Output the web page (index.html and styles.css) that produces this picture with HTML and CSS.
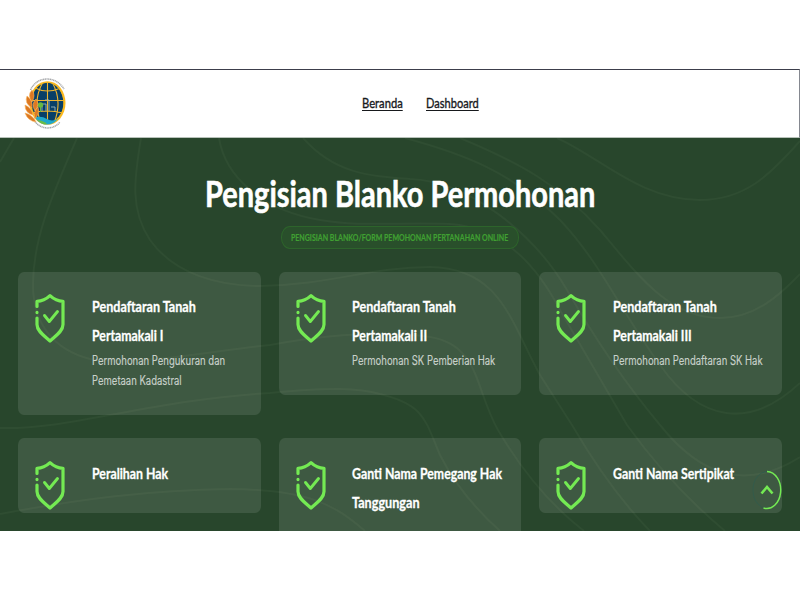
FILE: index.html
```html
<!DOCTYPE html>
<html lang="id">
<head>
<meta charset="utf-8">
<title>Pengisian Blanko Permohonan</title>
<link rel="stylesheet" href="styles.css">
</head>
<body>
<svg class="defs" width="0" height="0" aria-hidden="true">
  <symbol id="shield" viewBox="0 0 30 50">
    <g fill="none" stroke="#74ea53" stroke-width="3.2" stroke-linecap="round" stroke-linejoin="round">
      <path d="M2 13.500V8.300C7 8.300 11.500 6 15 2.700C18.500 6 23 8.300 28 8.300V31.500C28 38 21 42.500 15 48C9 42.500 2 38 2 31.500V25M2 19.400V19.600"/>
      <path d="M9.500 22.500L14.300 28.500L22.500 18.500" stroke-width="2.900"/>
    </g>
  </symbol>
</svg>
<div class="screen">
  <header class="header">
    <svg class="logo" viewBox="0 0 44 54">
      <defs><clipPath id="globe"><ellipse cx="24" cy="26.500" rx="16.500" ry="21"/></clipPath></defs>
      <path d="M7.500 13C14 -1.500 33 -1.500 41 12" fill="none" stroke="#a5a7aa" stroke-width="1.500" stroke-dasharray="1.200 .5"/>
      <path d="M12 44.500C18 53 31 53 37 45" fill="none" stroke="#a5a7aa" stroke-width="1.500" stroke-dasharray="1.200 .5"/>
      <ellipse cx="24.500" cy="26" rx="18" ry="21.800" fill="#fab91f"/>
      <g clip-path="url(#globe)">
        <ellipse cx="24.500" cy="25.500" rx="16" ry="19.800" fill="#083f67"/>
        <path d="M24.500 4V46M12 11Q24 17 38 11M8 23.500H41M9 36Q24 32 40 36M20 5Q9 24 18 46M29 5Q40 24 31 46" fill="none" stroke="#f0b52d" stroke-width="1.100"/>
        <path d="M9 41Q18 38 24 42T40 39V50H9Z" fill="#20a8ca"/>
        <path d="M12 43Q20 43 24 47L18 50Z" fill="#6abd45"/>
        <path d="M19 34V27H23V34M22 23H26V34M28 30H32V34" fill="none" stroke="#9db9bd" stroke-width=".9"/>
        <circle cx="17.500" cy="28" r="2.700" fill="#66b843"/><path d="M17.500 29V35" stroke="#66b843"/>
      </g>
      <g fill="#dd7822" stroke="#f6b35b" stroke-width=".6">
        <path d="M9 13Q4 18 9 25Q13 18 9 13ZM4 19Q1 26 9 31Q10 23 4 19ZM13 22Q8 27 12 34Q17 27 13 22ZM2 28Q2 36 10 38Q9 31 2 28ZM15 30Q10 34 12 42Q17 36 15 30ZM2 36Q5 44 13 45Q10 38 2 36Z"/>
      </g>
    </svg>
    <nav class="nav">
      <a class="nav-home" href="#"><span class="fit">Beranda</span></a>
      <a class="nav-dash" href="#"><span class="fit">Dashboard</span></a>
    </nav>
  </header>
  <main class="hero">
    <svg class="contours" viewBox="0 138 800 393">
      <path d="M14 138L0 162"/>
      <path d="M77 138C50 200 33 240 33 285C33 325 55 350 90 359C145 366 215 350 270 345C320 336 380 330 430 337C480 345 475 390 498 430Q535 493 584 531"/>
      <path d="M141 138C134 180 130 210 150 240C175 275 220 286 260 286C330 285 370 267 430 267C500 268 510 320 540 375L572 425Q610 490 650 531"/>
      <path d="M219 138C225 175 260 210 320 220C360 227 400 222 450 224C500 227 535 262 560 310L627 425Q670 485 725 531"/>
      <path d="M303 138C335 174 370 176 410 179C470 181 535 235 567 290Q610 365 660 425C700 475 745 492 800 457"/>
      <path d="M405 138C460 153 510 170 560 220C600 262 620 310 660 365C700 422 750 430 800 383"/>
      <path d="M460 138C520 163 560 185 600 230C640 278 670 318 720 318C755 318 780 295 800 274"/>
      <path d="M557 138C600 157 640 200 700 200C745 200 770 175 800 141"/>
      <path d="M0 428C70 430 150 400 270 393C330 387 360 388 380 394C425 405 425 420 440 455Q460 495 500 531"/>
      <path d="M0 514C80 499 150 490 230 489C310 490 335 505 365 531"/>
    </svg>
    <h1 class="title"><span class="fit">Pengisian Blanko Permohonan</span></h1>
    <p class="badge"><span class="fit">PENGISIAN BLANKO/FORM PEMOHONAN PERTANAHAN ONLINE</span></p>
    <section class="cards">
      <article class="card">
        <svg class="icon"><use href="#shield"/></svg>
        <div class="text"><h2><span class="fit t-pt">Pendaftaran Tanah</span><span class="fit">Pertamakali I</span></h2>
        <p><span class="fit">Permohonan Pengukuran dan</span><span class="fit">Pemetaan Kadastral</span></p></div>
      </article>
      <article class="card">
        <svg class="icon"><use href="#shield"/></svg>
        <div class="text"><h2><span class="fit t-pt">Pendaftaran Tanah</span><span class="fit">Pertamakali II</span></h2>
        <p><span class="fit">Permohonan SK Pemberian Hak</span></p></div>
      </article>
      <article class="card">
        <svg class="icon"><use href="#shield"/></svg>
        <div class="text"><h2><span class="fit t-pt">Pendaftaran Tanah</span><span class="fit">Pertamakali III</span></h2>
        <p><span class="fit">Permohonan Pendaftaran SK Hak</span></p></div>
      </article>
      <article class="card">
        <svg class="icon"><use href="#shield"/></svg>
        <div class="text"><h2><span class="fit">Peralihan Hak</span></h2></div>
      </article>
      <article class="card">
        <svg class="icon"><use href="#shield"/></svg>
        <div class="text"><h2><span class="fit">Ganti Nama Pemegang Hak</span><span class="fit t-tg">Tanggungan</span></h2></div>
      </article>
      <article class="card">
        <svg class="icon"><use href="#shield"/></svg>
        <div class="text"><h2><span class="fit">Ganti Nama Sertipikat</span></h2></div>
      </article>
    </section>
    <a class="to-top" href="#" aria-label="Kembali ke atas">
      <svg viewBox="0 0 30 40" fill="none">
        <ellipse cx="15" cy="20" rx="14" ry="18.500" stroke="#335b4b"/>
        <path d="M15 1.500A14 18.500 0 1 1 11.500 38" stroke="#74ea53" stroke-width="1.500"/>
        <path d="M9.500 23.500L15 17L20.500 23.500" stroke="#74ea53" stroke-width="2.600"/>
      </svg>
    </a>
  </main>
</div>
</body>
</html>
```
FILE: styles.css
```css
* { box-sizing: border-box; }
body { margin: 0; padding-top: 69px; height: 600px; overflow: hidden; background: #fff; }
h1, h2, p { margin: 0; }
.defs { position: absolute; }
.screen { height: 462px; overflow: hidden; font-family: Lato, sans-serif; }
.fit { display: block; width: max-content; white-space: nowrap; transform: scaleX(var(--sx, 1)); transform-origin: 0 50%; }

.header { display: flex; height: 69px; border-top: 1px solid #3c3e4b; border-right: 1px solid #858890; border-bottom: 1px solid #b8c2ba; background: #fff; }
.logo { flex: none; width: 44px; height: 54px; margin: 7px 0 0 23px; }
.nav { display: flex; gap: 22px; margin-left: 295px; padding-top: 24px; font-size: 13.5px; line-height: 18px; -webkit-text-stroke: .35px; }
.nav a { color: #17191c; text-decoration: underline; text-underline-offset: 2px; }
.nav-home { width: 42px; --sx: .83; }
.nav-dash { width: 54px; --sx: .82; }

.hero { position: relative; height: 393px; overflow: hidden; background: #28462c; }
.contours { position: absolute; inset: 0; width: 800px; height: 393px; fill: none; stroke: #f0ffd8; stroke-opacity: .04; stroke-width: 2; }
.title { position: relative; width: 390px; height: 44px; margin: 33px 0 0 205px; color: #fff; font-size: 36.5px; line-height: 44px; font-weight: 700; -webkit-text-stroke: .6px; --sx: .794; }
.badge { position: relative; width: 238px; height: 23px; margin: 11px 0 0 281px; padding-left: 9px; border: 1px solid #2d642b; border-radius: 9px / 11px; background: #294f2b; color: #40a032; font-size: 9.5px; line-height: 21px; font-weight: 700; -webkit-text-stroke: .15px; --sx: .737; }
.cards { position: relative; display: grid; grid-template-columns: repeat(3, 242.7px); align-items: start; gap: 23px 17.7px; margin: 22.5px 0 0 18.3px; }
.card { display: flex; padding: 21.5px 0 24px 17px; border-radius: 6px / 7px; background: rgba(255, 255, 255, .105); }
.icon { flex: none; width: 30px; height: 50px; margin-bottom: -24px; }
.text { flex: none; margin-left: 26.7px; }
.card h2 { color: #fff; font-size: 15.5px; line-height: 29px; font-weight: 700; -webkit-text-stroke: .3px; --sx: .793; }
.card h2 .fit { transform: translateY(-.6px) scaleX(var(--sx)); }
.card .t-pt { --sx: .811; }
.card .t-tg { --sx: .815; }
.card p { color: #c9d1ca; font: 12.7px/20px Inter, sans-serif; -webkit-text-stroke: .15px; --sx: .748; }
.to-top { position: absolute; left: 752px; top: 332px; width: 30px; height: 40px; }
.to-top svg { display: block; width: 30px; height: 40px; }
```
